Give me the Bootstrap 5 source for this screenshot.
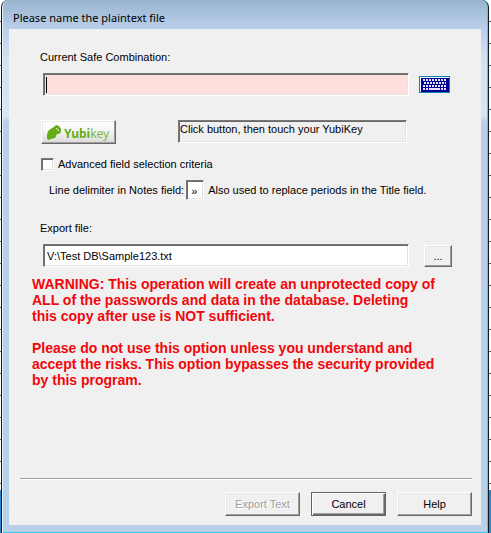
<!DOCTYPE html>
<html lang="en">
<head>
<meta charset="utf-8">
<meta name="viewport" content="width=device-width, initial-scale=1">
<title>Please name the plaintext file</title>
<link href="https://cdn.jsdelivr.net/npm/bootstrap@5.3.0/dist/css/bootstrap.min.css" rel="stylesheet">
<style>
body{font:11px/16px "Liberation Sans",Arial,sans-serif;color:#000;
 background:linear-gradient(transparent 92%,#2d87c8 92%),repeating-linear-gradient(#fff 0 21px,#555 21px 22px)}
.shell{padding:0 2px 0 1px}
.dialog{border:1px solid #101820;border-top:0;border-bottom:0;border-radius:7px 7px 0 0;
 background:linear-gradient(#9ab4d0 0,#b9d0ea 29px,#d3e2f3 60px,#d6e6f5 116px,#b9cfe9 122px,#b9d0e9);
 box-shadow:inset -1px 0 #3ad0ee,inset 1px 0 #e4f2fb,inset 0 -1px #35c8ec;padding:0 7px 8px}
.caption{font:11px/17px "Noto Sans","Open Sans",sans-serif;height:29px;padding:9px 4px 0;margin:0}
.client{background:#f0f0f0;padding:20px 9px 9px 11px}
.fields{padding:0 20px 0 20px}
.sunk{border:1px solid;border-color:#777 #fff #fff #777;box-shadow:inset 1px 1px #6a6a6a,inset -1px -1px #e3e3e3;
 border-radius:0;background:#fff;font:inherit;color:#000;outline:0;padding:0 3px}
.line{height:23px;min-width:0}
.entry{padding-left:3px}
.entry-secret{gap:10px;padding-right:2px}
.entry-file{gap:15px}
.secret{background:#ffdede;caret-color:#000}
.secret-box{position:relative}
.caret{position:absolute;left:3px;top:4px;width:1px;height:16px;background:#000}
.raised{border:1px solid;border-color:#fff #696969 #696969 #fff;box-shadow:inset -1px -1px #a0a0a0,inset 1px 1px #e8e8e8;
 background:#f0f0f0;border-radius:0;font:inherit;color:#000;padding:0;height:24px;width:75px}
.raised:disabled{color:#a0a0a0;text-shadow:1px 1px #fff}
.standard{border-color:#646464;box-shadow:inset 1px 1px #fff,inset -1px -1px #696969,inset -2px -2px #a0a0a0}
.keys{width:31px;height:17px;border:0;padding:0;background:none}
.raised.browse{width:28px;height:22px}
.yubi{background:linear-gradient(#fff,#f4f4f4 50%,#d9d9d9)}
.key-row{padding:0 45px 0 1px}
.hint{background:#f0f0f0;height:23px;width:229px;padding:0 0 0 1px;line-height:16px}
.tick{appearance:none;width:13px;height:13px;padding:0;margin:0 4px 0 1px}
.delim-row{padding-left:9px}
.delim{width:18px;height:20px;margin:0 4px 0 2px;padding:2px 0 0 4px}
.warning{color:#f0080c;font-size:14px;line-height:16px;font-weight:700;padding:0 0 0 12px;margin-top:9px}
.warning p{margin:0 0 16px}
.rule{border-top:1px solid #a0a0a0;border-bottom:1px solid #fff}
.actions{gap:11px;padding-top:12px}
svg{display:block}
</style>
</head>
<body>
<div class="shell min-vh-100 d-flex">
<main class="dialog flex-grow-1 d-flex flex-column">
 <h1 class="caption">Please name the plaintext file</h1>
 <form class="client flex-grow-1 d-flex flex-column">
  <div class="fields">
   <label for="combo" class="d-block mb-2">Current Safe Combination:</label>
   <div class="entry entry-secret d-flex align-items-center">
    <div class="secret-box flex-grow-1 d-flex"><input id="combo" type="password" class="sunk line secret flex-grow-1"><span class="caret"></span></div>
    <button type="button" class="keys" aria-label="Virtual keyboard">
     <svg width="31" height="17" viewBox="0 0 31 17" shape-rendering="crispEdges">
      <path fill="#1583a5" d="M0 0h31v17H0z"/><path fill="#e9f7ff" d="M1 1h29v15H1z"/><path fill="#000096" d="M2 2h28v14H2z"/>
      <path stroke="#e4e4ff" stroke-width="2" stroke-dasharray="2 1" d="M4 4h24M5 7h22M4 10h24"/>
      <path stroke="#e4e4ff" stroke-width="2" d="M4 13h2M7 13h2M10 13h11M22 13h2M25 13h2"/>
     </svg></button>
   </div>
   <div class="key-row d-flex justify-content-between mt-4">
    <button type="button" class="raised yubi" aria-label="Yubikey">
     <svg width="73" height="22" viewBox="0 0 73 22"><path fill="#65ad16" d="M5 14 6 10 10 7 12 6 14 4 17 5 19 8 19 11 17 13 15 13 13 17 9 18 6 19 5 17Z"/><path stroke="#f4fbe9" d="m14 7 3 3"/>
      <text x="22" y="17" font-family="Noto Sans,sans-serif" font-size="12" fill="#65ad16"><tspan font-weight="700">Yubi</tspan><tspan fill="#82b83b">key</tspan></text></svg></button>
    <output class="sunk hint">Click button, then touch your YubiKey</output>
   </div>
   <div class="d-flex align-items-center mt-2 pt-1"><input type="checkbox" id="adv" class="sunk tick"><label for="adv">Advanced field selection criteria</label></div>
   <div class="delim-row d-flex align-items-center mt-2"><label for="delim">Line delimiter in Notes field:</label><input id="delim" class="sunk delim" value="»"><span>Also used to replace periods in the Title field.</span></div>
   <label for="file" class="d-block mt-3 mb-2 pt-1">Export file:</label>
   <div class="entry entry-file d-flex align-items-center"><input id="file" class="sunk line flex-grow-1" value="V:\Test DB\Sample123.txt"><button type="button" class="raised browse" aria-label="Browse">...</button></div>
  </div>
  <div class="warning">
   <p>WARNING: This operation will create an unprotected copy of<br>ALL of the passwords and data in the database. Deleting<br>this copy after use is NOT sufficient.</p>
   <p>Please do not use this option unless you understand and<br>accept the risks. This option bypasses the security provided<br>by this program.</p>
  </div>
  <div class="mt-auto">
   <div class="rule"></div>
   <div class="actions d-flex justify-content-end">
    <button type="button" class="raised" disabled>Export Text</button><button type="button" class="raised standard">Cancel</button><button type="button" class="raised">Help</button>
   </div>
  </div>
 </form>
</main>
</div>
<script src="https://cdn.jsdelivr.net/npm/bootstrap@5.3.0/dist/js/bootstrap.bundle.min.js"></script>
</body>
</html>
